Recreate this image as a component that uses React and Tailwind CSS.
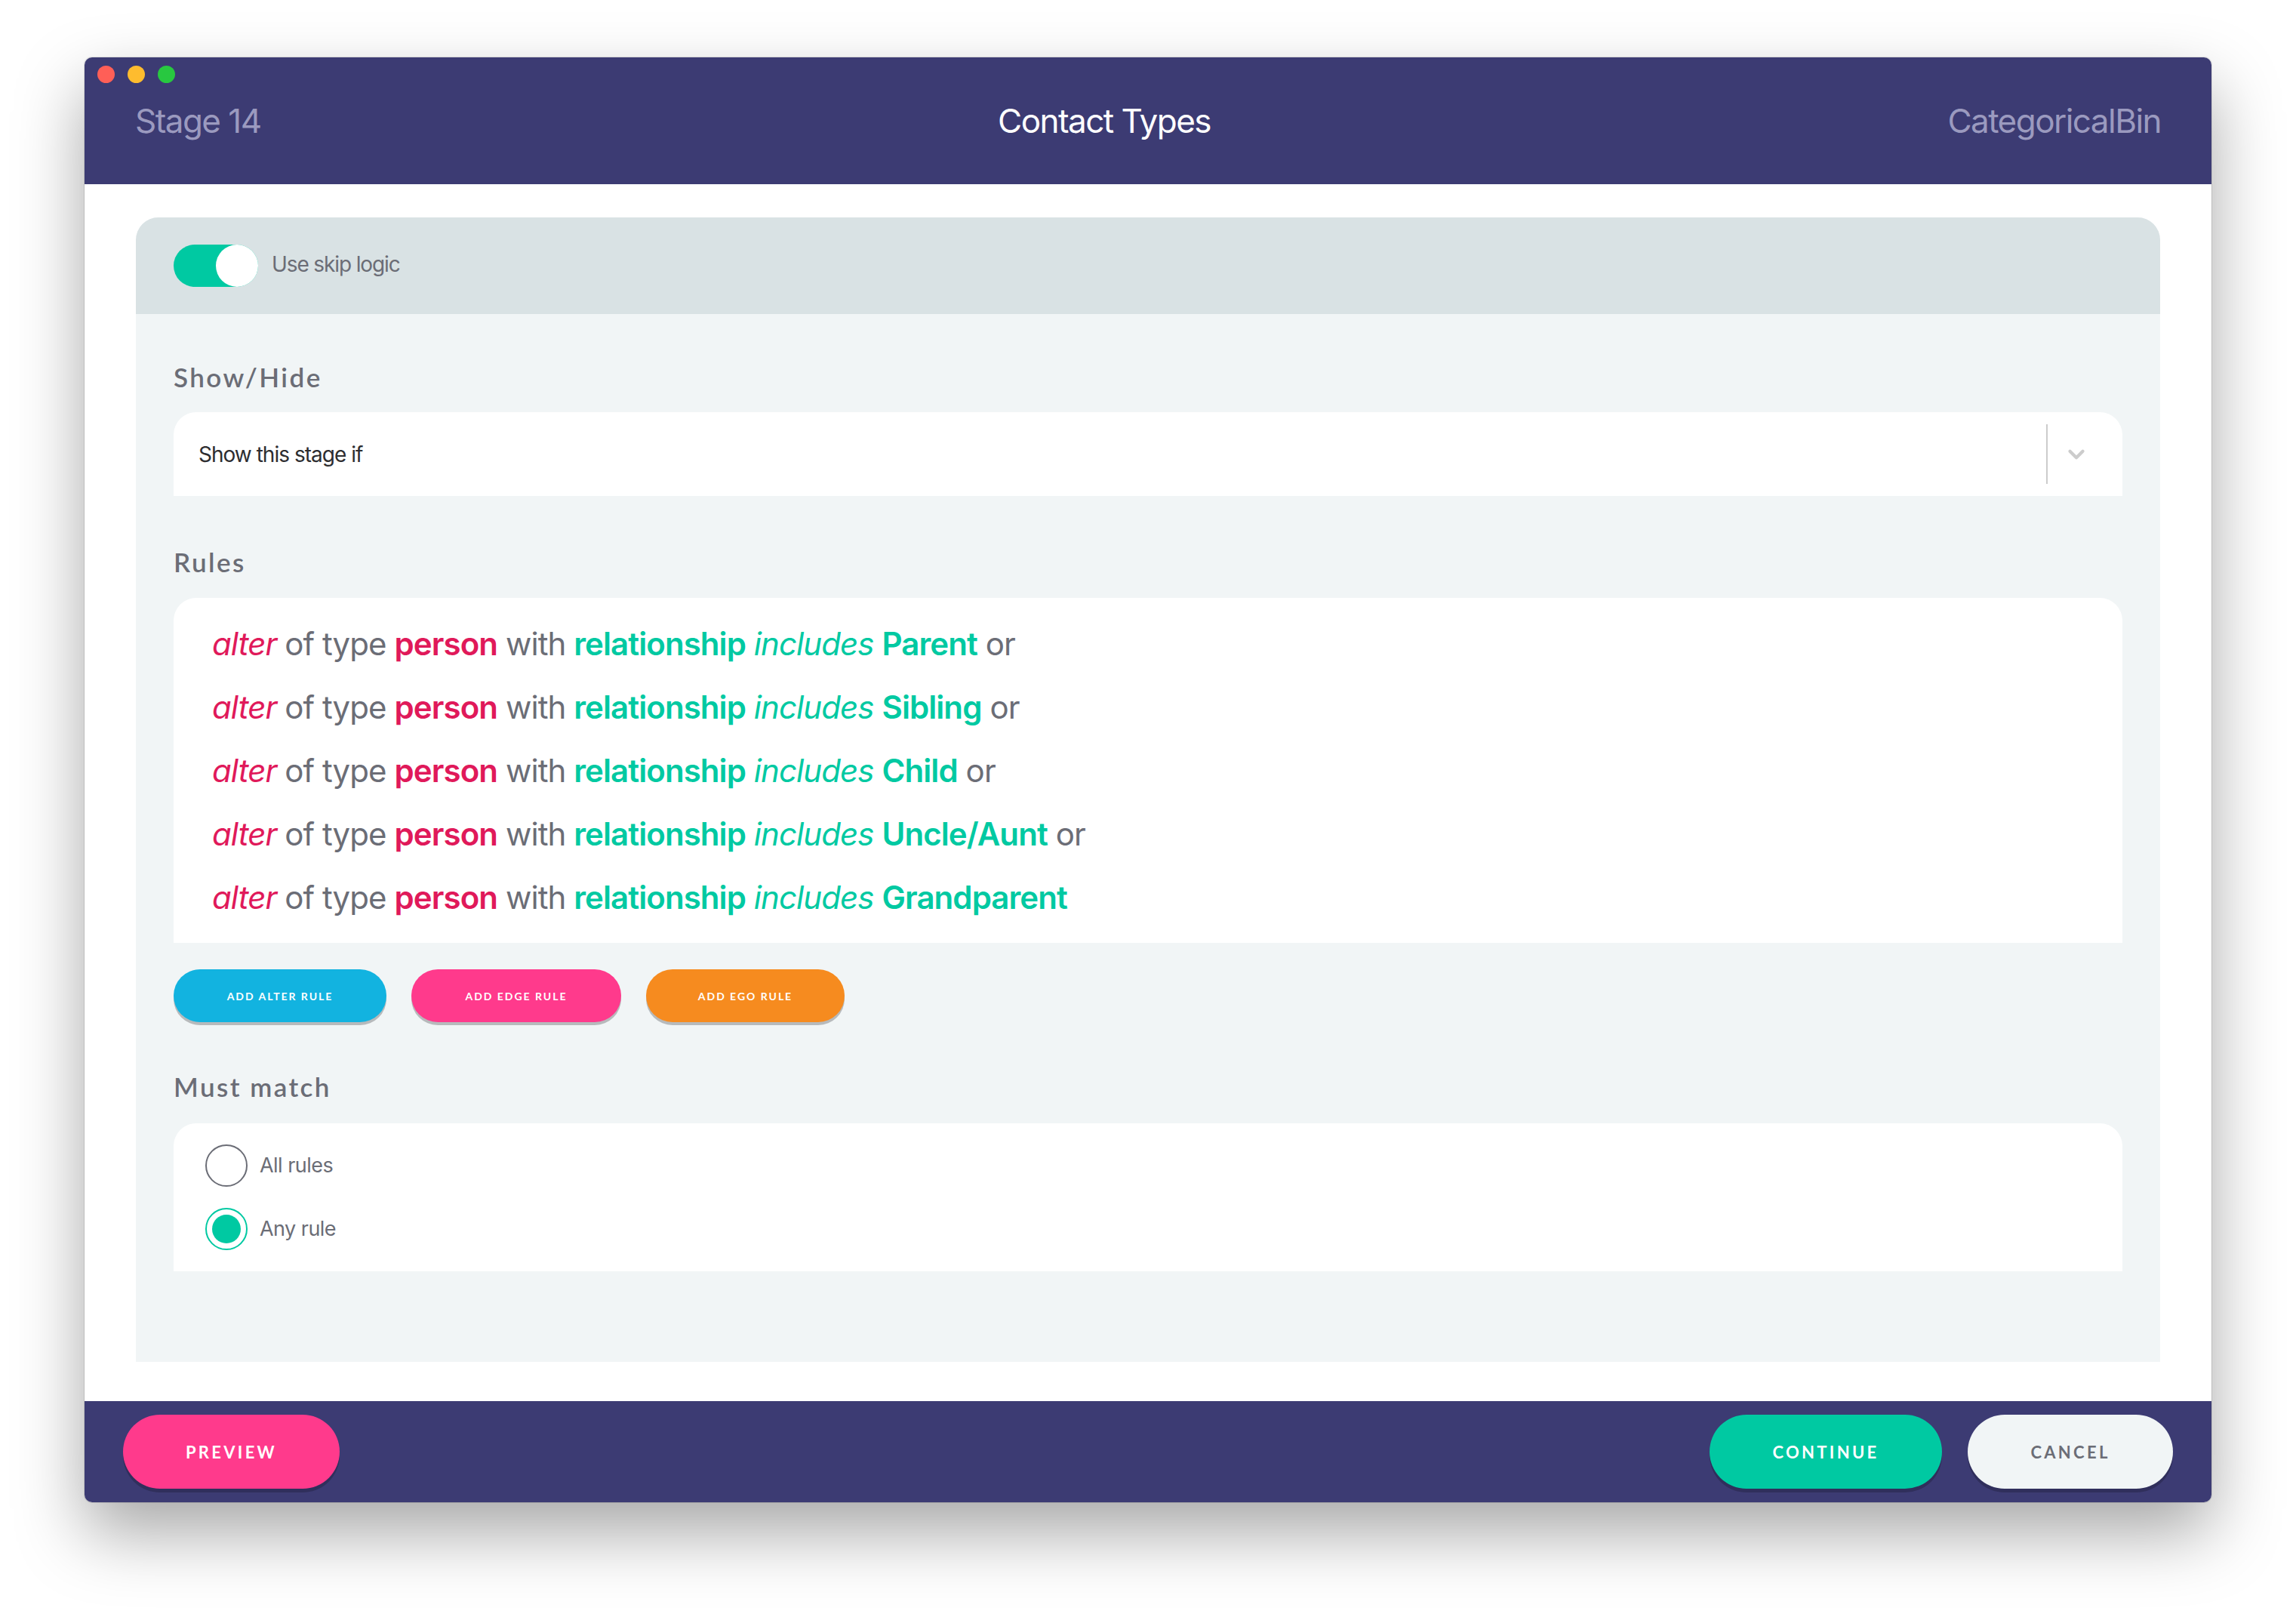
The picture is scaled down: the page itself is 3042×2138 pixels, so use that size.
import { ChevronDown } from 'lucide-react'

const sans = 'font-["Inter","Liberation_Sans",sans-serif]'
const round = 'font-["Lato","Open_Sans",sans-serif]'

const rules = ['Parent', 'Sibling', 'Child', 'Uncle/Aunt', 'Grandparent']

function Rule({ value, last }) {
  return (
    <div className="leading-[84px] whitespace-nowrap">
      <span className="italic text-[#e0195a]">alter</span>
      <span className="text-[#6b6d76]"> of type </span>
      <span className="font-semibold text-[#e0195a]">person</span>
      <span className="text-[#6b6d76]"> with </span>
      <span className="font-semibold text-[#00c9a2]">relationship</span>{' '}
      <span className="italic text-[#00c9a2]">includes</span>{' '}
      <span className="font-semibold text-[#00c9a2]">{value}</span>
      {!last && <span className="text-[#6b6d76]"> or</span>}
    </div>
  )
}

function Label({ children }) {
  return (
    <div className={`${round} text-[35px] leading-[40px] font-semibold tracking-[0.07em] text-[#6b6d76]`}>
      {children}
    </div>
  )
}

function Radio({ checked, label }) {
  return (
    <div className="flex items-center gap-[16px] h-[56px]">
      <div
        className={`w-[56px] h-[56px] rounded-full border-2 flex items-center justify-center ${checked ? 'border-[#00c9a2]' : 'border-[#6b6d76]'}`}
      >
        {checked && <div className="w-[38px] h-[38px] rounded-full bg-[#00c9a2]" />}
      </div>
      <span className={`${sans} text-[27px] tracking-[-0.02em] text-[#6b6d76]`}>{label}</span>
    </div>
  )
}

export default function App() {
  return (
    <div className="w-[3042px] h-[2138px] bg-white pt-[76px] px-[112px]">
      <div className="w-[2818px] h-[1914px] flex flex-col rounded-[10px] overflow-hidden shadow-[0_40px_90px_rgba(0,0,0,0.35),0_0_0_1px_rgba(0,0,0,0.1)]">
        {/* title bar */}
        <div className="relative h-[168px] shrink-0 bg-[#3c3b73] flex items-center justify-between px-[67px]">
          <div className="absolute left-[17px] top-[11px] flex gap-[17px]">
            <div className="w-[23px] h-[23px] rounded-full bg-[#ff5f57]" />
            <div className="w-[23px] h-[23px] rounded-full bg-[#febc2e]" />
            <div className="w-[23px] h-[23px] rounded-full bg-[#28c840]" />
          </div>
          <span className={`${sans} text-[44px] text-[#9b9abf] tracking-[-0.035em]`}>Stage 14</span>
          <span className={`${sans} text-[44px] text-white tracking-[-0.035em]`}>Contact Types</span>
          <span className={`${sans} text-[44px] text-[#9b9abf] tracking-[-0.035em]`}>CategoricalBin</span>
        </div>

        {/* body */}
        <div className="flex-1 bg-white px-[68px] pt-[44px] pb-[52px] flex flex-col">
          <div className="flex-1 flex flex-col bg-[#f1f5f6] rounded-t-[30px] overflow-hidden">
            <div className="h-[128px] shrink-0 bg-[#d9e2e4] flex items-center px-[50px] gap-[18px]">
              <div className="w-[112px] h-[56px] rounded-full bg-[#00c9a2] flex justify-end">
                <div className="w-[56px] h-[56px] rounded-full bg-white" />
              </div>
              <span className={`${sans} text-[28px] tracking-[-0.04em] text-[#6b6d76] -mt-[4px]`}>Use skip logic</span>
            </div>

            <div className="px-[50px] pt-[63px] flex flex-col">
              <Label>Show/Hide</Label>
              <div className="mt-[27px] h-[111px] bg-white rounded-t-[30px] flex items-center">
                <span className={`${sans} flex-1 pl-[33px] text-[28px] tracking-[-0.035em] text-[#2d2d30]`}>Show this stage if</span>
                <div className="w-[2px] h-[79px] bg-[#cccccc]" />
                <div className="w-[75px] flex justify-center mr-[24px]">
                  <ChevronDown size={34} strokeWidth={3} className="text-[#cccccc]" />
                </div>
              </div>

              <div className="mt-[67px]">
                <Label>Rules</Label>
              </div>
              <div className={`${sans} mt-[28px] bg-white rounded-t-[30px] pl-[51px] pt-[19px] pb-[18px] text-[42px] tracking-[-0.022em]`}>
                {rules.map((r, i) => (
                  <Rule key={r} value={r} last={i === rules.length - 1} />
                ))}
              </div>

              <div className={`${round} mt-[35px] flex gap-[33px] text-[14px] font-bold tracking-[0.14em] text-white`}>
                <button className="w-[282px] h-[70px] rounded-full bg-[#12b3e0] shadow-[0_4px_0_#b7babc]">ADD ALTER RULE</button>
                <button className="w-[278px] h-[70px] rounded-full bg-[#ff3a8c] shadow-[0_4px_0_#b7babc]">ADD EDGE RULE</button>
                <button className="w-[263px] h-[70px] rounded-full bg-[#f68b1f] shadow-[0_4px_0_#b7babc]">ADD EGO RULE</button>
              </div>

              <div className="mt-[65px]">
                <Label>Must match</Label>
              </div>
              <div className="mt-[29px] bg-white rounded-t-[30px] pl-[42px] py-[28px] flex flex-col gap-[28px]">
                <Radio label="All rules" />
                <Radio checked label="Any rule" />
              </div>
            </div>
          </div>
        </div>

        {/* footer */}
        <div className={`${round} h-[134px] shrink-0 bg-[#3c3b73] flex items-center justify-between px-[51px] text-[22px] font-bold tracking-[0.15em]`}>
          <button className="w-[287px] h-[98px] rounded-full bg-[#ff3a8c] text-white shadow-[0_5px_0_rgba(0,0,0,0.2)]">PREVIEW</button>
          <div className="flex gap-[34px]">
            <button className="w-[308px] h-[98px] rounded-full bg-[#00c9a2] text-white shadow-[0_5px_0_rgba(0,0,0,0.2)]">CONTINUE</button>
            <button className="w-[272px] h-[98px] rounded-full bg-[#f1f5f6] text-[#6b6d76] shadow-[0_5px_0_rgba(0,0,0,0.2)]">CANCEL</button>
          </div>
        </div>
      </div>
    </div>
  )
}
